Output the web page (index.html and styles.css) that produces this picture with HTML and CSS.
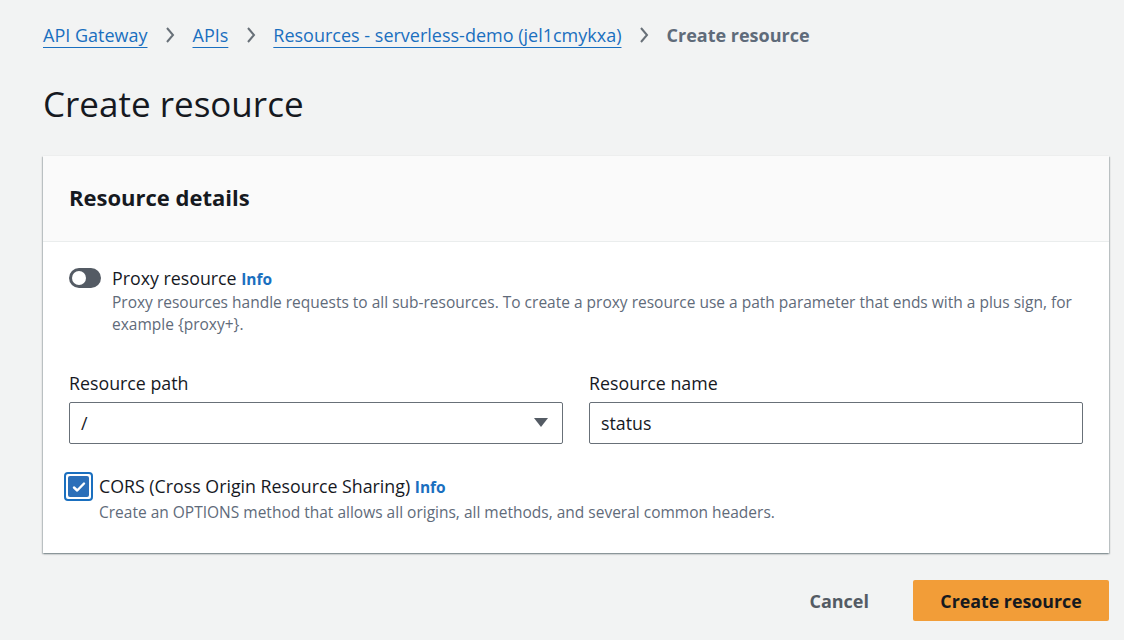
FILE: index.html
```html
<!DOCTYPE html>
<html>
<head>
<meta charset="utf-8">
<link rel="stylesheet" href="styles.css">
</head>
<body>
<div class="page">
  <nav class="crumbs">
    <a class="crumb-link">API Gateway</a>
    <svg class="chev" width="10" height="18" viewBox="0 0 10 18"><path d="M2 2l6 7-6 7" fill="none" stroke="#687078" stroke-width="2"/></svg>
    <a class="crumb-link">APIs</a>
    <svg class="chev" width="10" height="18" viewBox="0 0 10 18"><path d="M2 2l6 7-6 7" fill="none" stroke="#687078" stroke-width="2"/></svg>
    <a class="crumb-link">Resources - serverless-demo (jel1cmykxa)</a>
    <svg class="chev" width="10" height="18" viewBox="0 0 10 18"><path d="M2 2l6 7-6 7" fill="none" stroke="#687078" stroke-width="2"/></svg>
    <span class="crumb-current">Create resource</span>
  </nav>

  <h1 class="title">Create resource</h1>

  <section class="card">
    <header class="card-head">
      <h2 class="card-title">Resource details</h2>
    </header>
    <div class="card-body">
      <div class="toggle-row">
        <span class="toggle"><span class="knob"></span></span>
        <div class="toggle-text">
          <div class="opt-label">Proxy resource <a class="info">Info</a></div>
          <div class="opt-desc">Proxy resources handle requests to all sub-resources. To create a proxy resource use a path parameter that ends with a plus sign, for example {proxy+}.</div>
        </div>
      </div>

      <div class="fields">
        <div class="field">
          <div class="field-label">Resource path</div>
          <div class="select">
            <span>/</span>
            <svg width="14" height="10" viewBox="0 0 14 10"><path d="M0 0h14L7 9z" fill="#545b64"/></svg>
          </div>
        </div>
        <div class="field">
          <div class="field-label">Resource name</div>
          <div class="input">status</div>
        </div>
      </div>

      <div class="check-row">
        <span class="check-ring">
          <span class="check-box">
            <svg width="16" height="16" viewBox="0 0 16 16"><path d="M3 8.5l3.2 3L13 4.5" fill="none" stroke="#fff" stroke-width="2.4" stroke-linecap="round" stroke-linejoin="round"/></svg>
          </span>
        </span>
        <div class="check-text">
          <div class="opt-label">CORS (Cross Origin Resource Sharing) <a class="info">Info</a></div>
          <div class="opt-desc">Create an OPTIONS method that allows all origins, all methods, and several common headers.</div>
        </div>
      </div>
    </div>
  </section>

  <div class="actions">
    <button class="btn-link">Cancel</button>
    <button class="btn-primary">Create resource</button>
  </div>
</div>
</body>
</html>
```

FILE: styles.css
```css
* { box-sizing: border-box; }
html, body {
  margin: 0;
  padding: 0;
  background: #f2f3f3;
  font-family: "Open Sans", "Noto Sans", sans-serif;
  color: #16191f;
}
.page {
  padding: 20px 15px 0 43px;
}
.crumbs {
  display: flex;
  align-items: center;
  gap: 17.5px;
  height: 30px;
  font-size: 18px;
}
.crumb-link {
  color: #1a6fbf;
  text-decoration: underline;
  text-underline-offset: 5px;
  text-decoration-thickness: 1px;
}
.chev { display: block; }
.crumb-current {
  color: #5f6b7a;
  font-weight: 700;
}
.title {
  margin: 0;
  padding-top: 33px;
  height: 106px;
  font-size: 35px;
  font-weight: 400;
  line-height: 42px;
  color: #16191f;
}
.card {
  width: 1066px;
  background: #fff;
  box-shadow: 0 1px 2px 0 rgba(0,28,36,0.3), 1px 1px 1px 0 rgba(0,28,36,0.15), -1px 1px 1px 0 rgba(0,28,36,0.15);
}
.card-head {
  background: #fafafa;
  border-bottom: 1px solid #eaeded;
  height: 86px;
  display: flex;
  align-items: center;
  padding: 0 26px 4px;
}
.card-title {
  margin: 0;
  font-size: 22px;
  font-weight: 700;
}
.card-body {
  padding: 24px 26px 30px 26px;
}
.toggle-row {
  display: flex;
  gap: 11px;
}
.toggle {
  margin-top: 2px;
  width: 32px;
  height: 20px;
  border-radius: 10px;
  background: #545b64;
  position: relative;
  flex: none;
}
.knob {
  position: absolute;
  left: 3px;
  top: 3px;
  width: 14px;
  height: 14px;
  border-radius: 50%;
  background: #fff;
}
.opt-label {
  font-size: 17.8px;
  line-height: 24px;
  color: #16191f;
}
.info {
  color: #1a6fbf;
  font-weight: 700;
  font-size: 15.5px;
}
.opt-desc {
  font-size: 15.5px;
  line-height: 22px;
  color: #5f6b7a;
}
.fields {
  display: flex;
  gap: 26px;
  margin-top: 37px;
}
.field { flex: 1; }
.field-label {
  font-size: 17.8px;
  line-height: 22px;
  margin-bottom: 8px;
}
.select, .input {
  height: 42px;
  border: 1px solid #687078;
  border-radius: 2px;
  display: flex;
  align-items: center;
  padding: 0 14px 0 11px;
  font-size: 17.8px;
  background: #fff;
}
.select { justify-content: space-between; }
.check-row {
  display: flex;
  gap: 6px;
  margin-top: 28px;
}
.check-ring {
  flex: none;
  width: 29px;
  height: 29px;
  border: 2px solid #1a6fbf;
  border-radius: 4px;
  margin-left: -5px;
  display: flex;
  align-items: center;
  justify-content: center;
}
.check-box {
  width: 21px;
  height: 21px;
  background: #2b6fb9;
  border-radius: 2px;
  display: flex;
  align-items: center;
  justify-content: center;
}
.check-text .opt-label { line-height: 28px; }
.actions {
  width: 1066px;
  display: flex;
  justify-content: flex-end;
  align-items: center;
  gap: 24px;
  margin-top: 27px;
}
.btn-link {
  border: 0;
  background: none;
  font-family: inherit;
  font-size: 18px;
  font-weight: 700;
  color: #545b64;
  padding: 0 20px;
}
.btn-primary {
  border: 0;
  background: #f29d38;
  border-radius: 2px;
  height: 41px;
  width: 196px;
  font-family: inherit;
  font-size: 17.8px;
  font-weight: 700;
  color: #16191f;
}
```
